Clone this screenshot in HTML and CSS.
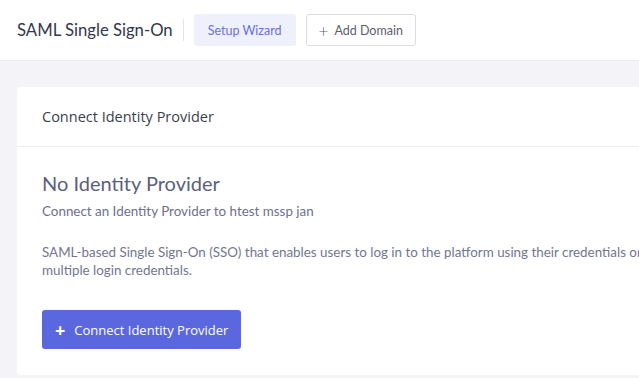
FILE: index.html
```html
<!DOCTYPE html>
<html lang="en">
<head>
    <meta charset="UTF-8">
    <meta name="viewport" content="width=device-width, initial-scale=1.0">
    <title>SAML Single Sign-On</title>
    <link rel="stylesheet" href="styles.css">
</head>
<body>
    <header class="topbar">
        <h1 class="page-title">SAML Single Sign-On</h1>
        <span class="divider"></span>
        <button class="btn btn-soft">Setup Wizard</button>
        <button class="btn btn-outline"><span class="plus">+</span>Add Domain</button>
    </header>

    <main class="content">
        <section class="card">
            <div class="card-header">Connect Identity Provider</div>
            <div class="card-body">
                <h2 class="empty-title">No Identity Provider</h2>
                <p class="empty-sub">Connect an Identity Provider to htest mssp jan</p>
                <p class="empty-text">SAML-based Single Sign-On (SSO) that enables users to log in to the platform using their credentials once, without having to remember multiple login credentials.</p>
                <button class="btn btn-primary"><span class="plus">+</span>Connect Identity Provider</button>
            </div>
        </section>
    </main>
</body>
</html>
```

FILE: styles.css
```css
html, body { margin: 0; padding: 0; }
body { font-family: Lato, "Noto Sans", sans-serif; background: #f3f3f8; overflow: hidden; width: 639px; height: 378px; }

.topbar { display: flex; align-items: center; height: 61px; padding: 0 0 0 17px; background: #fff; border-bottom: 1px solid #ececf2; box-sizing: border-box; }
.page-title { margin: 0; font-size: 16.7px; font-weight: 400; color: #34374a; }
.divider { width: 1px; height: 22px; background: #e2e2e8; margin: 0 10px 0 10px; }
.btn { font-family: Lato, "Noto Sans", sans-serif; border: none; border-radius: 3px; cursor: pointer; display: inline-flex; align-items: center; }
.btn-soft { height: 32px; padding: 0 14px; background: #eef0fc; color: #6b6fd9; font-size: 12.5px; }
.btn-outline { height: 32px; margin-left: 10px; padding: 0 12px; background: #fff; color: #5d606c; border: 1px solid #dcdce2; font-size: 12.5px; }
.btn-outline .plus { font-size: 17px; margin-right: 6px; color: #5d606c; font-weight: 300; }

.content { padding: 26px 0 0 17px; }
.card { width: 940px; background: #fff; border-radius: 4px; }
.card-header { font-family: "Open Sans", sans-serif; font-size: 14.5px; color: #3b3e4b; padding: 20px 25px 20px 25px; border-bottom: 1px solid #ececf2; }
.card-body { padding: 24px 25px 26px 25px; }
.empty-title { margin: 0; font-size: 20px; font-weight: 400; color: #5b5f7d; }
.empty-sub { margin: 8px 0 0; font-size: 13.4px; color: #6c7090; }
.empty-text { width: 822px; margin: 24px 0 0; font-size: 13.4px; line-height: 18px; color: #727690; }
.btn-primary { margin-top: 31px; height: 39px; padding: 0 13px; background: #5a67de; color: #fff; font-family: "Open Sans", sans-serif; font-size: 13px; }
.btn-primary .plus { font-size: 18px; font-weight: 700; margin-right: 9px; }
```
